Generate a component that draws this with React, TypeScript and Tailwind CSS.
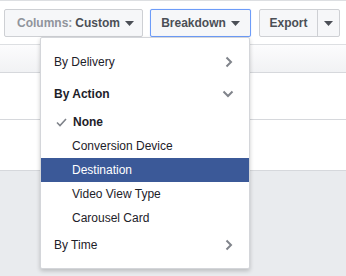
import React from 'react';

const font = { fontFamily: '"Liberation Sans", Arial, sans-serif' };

function Caret() {
  return (
    <svg width="9" height="5" viewBox="0 0 9 5" className="ml-[5px]">
      <path d="M0 0h9L4.5 5z" fill="#4b4f56" />
    </svg>
  );
}

function ChevronRight() {
  return (
    <svg width="8" height="12" viewBox="0 0 8 12">
      <path d="M1.5 1.5 6 6l-4.5 4.5" fill="none" stroke="#80848b" strokeWidth="2" />
    </svg>
  );
}

function ChevronDown() {
  return (
    <svg width="12" height="8" viewBox="0 0 12 8">
      <path d="M1.5 1.5 6 6l4.5-4.5" fill="none" stroke="#80848b" strokeWidth="2" />
    </svg>
  );
}

export default function App() {
  const subItems = ['Conversion Device', 'Destination', 'Video View Type', 'Carousel Card'];

  return (
    <div className="relative w-[346px] h-[276px] overflow-hidden bg-white text-[12px]" style={font}>
      {/* Toolbar */}
      <div className="h-[44px] border-t border-[#dddfe2] flex items-start pt-[8px] pl-[4px]">
        <button className="h-[28px] w-[139px] flex items-center pl-[12px] bg-[#f6f7f9] border border-[#ced0d4] rounded-[2px]">
          <span className="text-[#90949c] font-bold">Columns:</span>
          <span className="text-[#4b4f56] font-bold ml-[3px]">Custom</span>
          <Caret />
        </button>
        <button className="ml-[7px] h-[28px] w-[101px] flex items-center justify-center bg-[#f6f7f9] border border-[#6d9cf9] rounded-[2px] shadow-[0_0_1px_#9ebcf7] text-[#4b4f56] font-bold">
          Breakdown
          <Caret />
        </button>
        <div className="ml-[8px] h-[28px] w-[81px] flex bg-[#f6f7f9] border border-[#ced0d4] rounded-[2px]">
          <span className="flex-1 flex items-center justify-center text-[#4b4f56] font-bold border-r border-[#ced0d4]">
            Export
          </span>
          <span className="w-[21px] flex items-center justify-center">
            <svg width="9" height="5" viewBox="0 0 9 5">
              <path d="M0 0h9L4.5 5z" fill="#4b4f56" />
            </svg>
          </span>
        </div>
      </div>

      {/* Table */}
      <div className="border-t border-[#dddfe2] h-[28px] bg-gradient-to-b from-[#fcfcfd] to-[#f1f2f4]" />
      <div className="border-t border-[#d6d8dc] h-[47px] bg-white" />
      <div className="border-t border-[#d6d8dc] h-[51px] bg-white" />
      <div className="border-t border-[#d6d8dc] h-[106px] bg-[#e9ebee]" />

      {/* Dropdown menu */}
      <div className="absolute left-[40px] top-[37px] w-[210px] h-[232px] bg-white border border-[#d4d6da] rounded-[2px] shadow-[0_2px_4px_rgba(0,0,0,0.2)] pt-[8px] text-[#1d2129]">
        <div className="h-[32px] flex items-center justify-between pl-[13px] pr-[16px]">
          <span>By Delivery</span>
          <ChevronRight />
        </div>
        <div className="h-[32px] flex items-center justify-between pl-[13px] pr-[15px]">
          <span className="font-bold">By Action</span>
          <ChevronDown />
        </div>
        <div className="h-[24px] flex items-center pl-[15px]">
          <svg width="11" height="9" viewBox="0 0 11 9" className="mr-[6px]">
            <path d="M1 4.5 4 7.5 10 1" fill="none" stroke="#7f838a" strokeWidth="1.6" />
          </svg>
          <span className="font-bold">None</span>
        </div>
        {subItems.map((item) => (
          <div
            key={item}
            className={
              item === 'Destination'
                ? 'h-[24px] flex items-center pl-[31px] bg-[#3b5998] text-white'
                : 'h-[24px] flex items-center pl-[31px]'
            }
          >
            {item}
          </div>
        ))}
        <div className="h-[30px] flex items-center justify-between pl-[13px] pr-[16px]">
          <span>By Time</span>
          <ChevronRight />
        </div>
      </div>
    </div>
  );
}
